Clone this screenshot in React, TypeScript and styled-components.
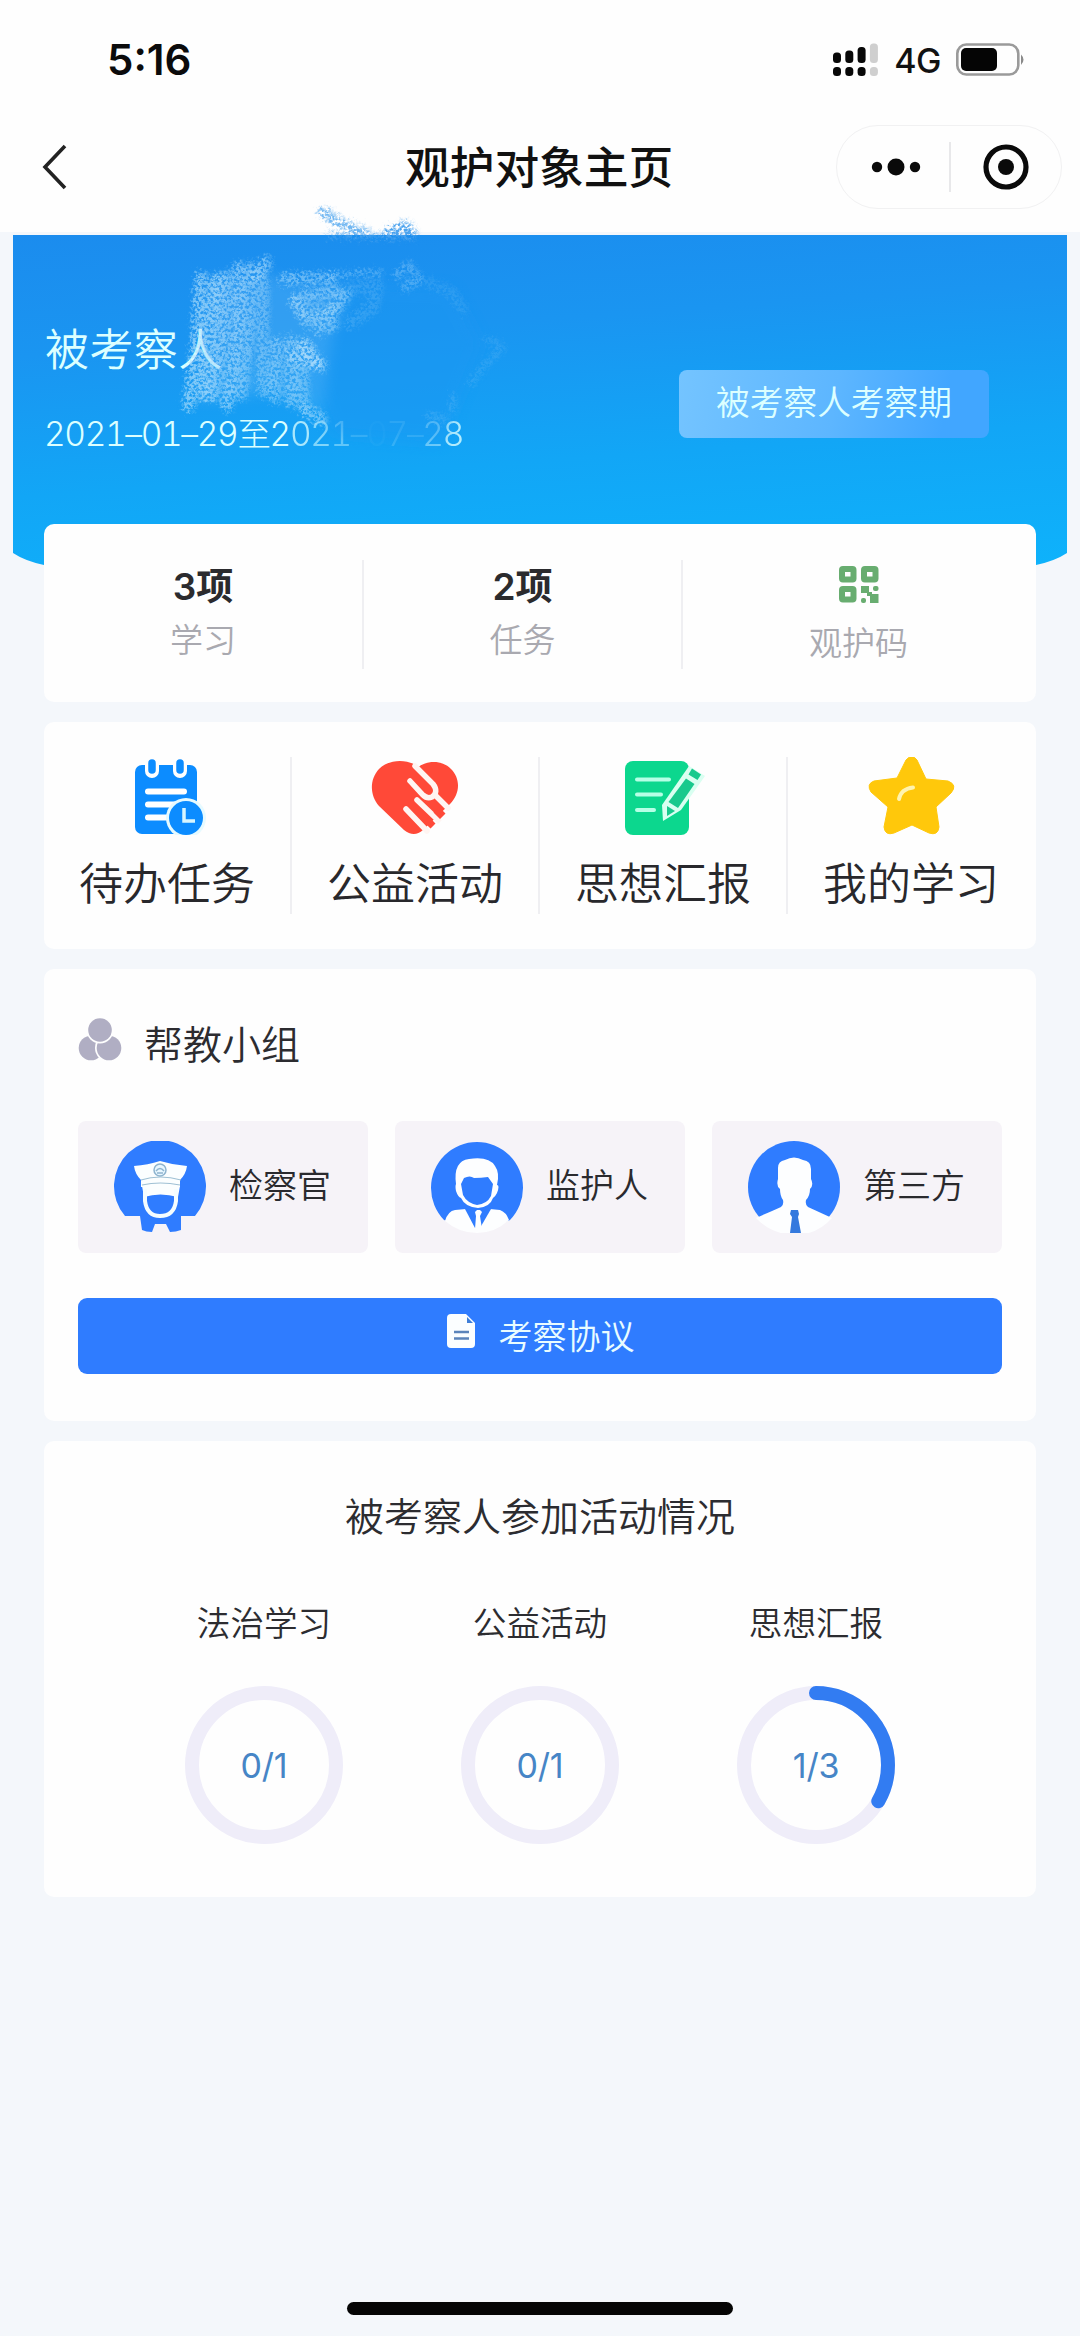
import React from "react";
import styled, { createGlobalStyle } from "styled-components";

const Global = createGlobalStyle`
  * { box-sizing: border-box; }
  body { margin: 0; background: #f4f7fb; }
`;

const Page = styled.main`
  width: 1080px;
  height: 2336px;
  background: #f4f7fb;
  color: #2c2c30;
  font-family: "Liberation Sans", "Noto Sans CJK SC", sans-serif;
  display: flex;
  flex-direction: column;
  position: relative;
  overflow: hidden;
`;

const StatusBar = styled.div`
  height: 118px;
  flex: none;
  background: #fefefe;
  display: flex;
  align-items: center;
  justify-content: space-between;
  padding: 1px 56px 0 107px;
`;

const Clock = styled.span`
  font: 600 42px/50px Inter, "Liberation Sans", sans-serif;
  color: #0b0b0c;
  letter-spacing: 0;
`;

const StatusRight = styled.div`
  display: flex;
  align-items: center;
`;

const Network = styled.span`
  font: 500 34px/40px Inter, "Liberation Sans", sans-serif;
  color: #111;
  letter-spacing: -0.5px;
  margin: 2px 15px 0 15px;
`;

const NavBar = styled.header`
  height: 114px;
  flex: none;
  background: #fefefe;
  display: grid;
  grid-template-columns: 405px 1fr 226px;
  align-items: start;
  padding: 7px 18px 0 0;
`;

const Back = styled.button`
  border: 0;
  background: none;
  padding: 0 0 0 42px;
  height: 84px;
  display: flex;
  align-items: center;
`;

const Title = styled.h1`
  margin: 2px 0 0;
  font-size: 44.7px;
  line-height: 84px;
  font-weight: 500;
  color: #111;
  white-space: nowrap;
`;

const Capsule = styled.div`
  height: 84px;
  border: 1.500px solid #f1f1f2;
  border-radius: 42px;
  display: flex;
  align-items: center;
`;

const CapsuleHalf = styled.span`
  width: 112px;
  display: flex;
  justify-content: center;
  padding-left: 6px;
  & + & { border-left: 2px solid #e8e8ea; padding: 0; }
`;

const Hero = styled.section`
  margin: 3px 13px 0;
  height: 330px;
  flex: none;
  position: relative;
  background: linear-gradient(176deg, #1b8cee 0%, #1a95f1 30%, #12a6f6 65%, #0eb2fb 100%);
  clip-path: path("M0 0H1054V318Q1042 326 1023 330H31Q12 326 0 318Z");
  display: flex;
  justify-content: space-between;
  padding: 83px 78px 0 32px;
`;

const Person = styled.div`
  display: flex;
  flex-direction: column;
  color: #dcffff;
`;

const PersonName = styled.span`
  font-size: 44px;
  line-height: 66px;
  font-weight: 350;
  letter-spacing: 0.4px;
`;

const Period = styled.span`
  margin: 25px 0 0 -1px;
  font: 300 33.500px/50px Inter, "Noto Sans CJK SC", sans-serif;
  font-feature-settings: "tnum";
  letter-spacing: -1.350px;
  white-space: nowrap;
`;

const Faded = styled.span<{ $a: number }>`
  opacity: ${(p) => p.$a};
`;

const Badge = styled.span`
  margin-top: 52px;
  width: 310px;
  height: 68px;
  border-radius: 8px;
  background: linear-gradient(100deg, #74c4ff, #5db6ff 50%, #41a6ff 85%);
  color: #dcffff;
  font-size: 33.7px;
  line-height: 67px;
  font-weight: 350;
  text-align: center;
`;

const Smudge = styled.svg`
  position: absolute;
  left: 0;
  top: 200px;
  pointer-events: none;
`;

const Cards = styled.div`
  display: flex;
  flex-direction: column;
  gap: 20px;
  padding: 0 44px;
  margin-top: -41px;
  position: relative;
`;

const Card = styled.section<{ $h: number }>`
  height: ${(p) => p.$h}px;
  background: #fefefe;
  border-radius: 10px;
`;

const StatCard = styled(Card)`
  display: grid;
  grid-template-columns: 318px 319px 1fr;
  padding-top: 36px;
`;

const Stat = styled.div`
  height: 109px;
  display: flex;
  flex-direction: column;
  align-items: center;
  & + & { border-left: 2px solid #efeff2; }
  &:last-child { padding-right: 2px; }
`;

const StatValue = styled.strong`
  margin-top: 1px;
  font: 600 37px/52px Inter, "Noto Sans CJK SC", sans-serif;
  color: #2b2b2e;
`;

const StatLabel = styled.span`
  margin-top: 2px;
  font-size: 33px;
  line-height: 52px;
  font-weight: 350;
  color: #a9a9b0;
`;

const CodeIcon = styled.svg`
  margin: 6px 0 14px;
  flex: none;
  & + span { margin-top: 0; }
`;

const MenuCard = styled(Card)`
  display: grid;
  grid-template-columns: repeat(4, 1fr);
  padding-top: 35px;
`;

const MenuItem = styled.div`
  height: 157px;
  display: flex;
  flex-direction: column;
  align-items: center;
  border-right: 2px solid #efeff2;
  &:last-child { border-color: transparent; }
  svg { flex: none; }
`;

const MenuLabel = styled.span`
  flex: none;
  margin-top: 17px;
  font-size: 44px;
  line-height: 66px;
  font-weight: 350;
  color: #28282c;
`;

const TeamCard = styled(Card)`
  padding: 42px 34px 0;
`;

const TeamHead = styled.div`
  display: flex;
  align-items: center;
  height: 64px;
  svg { margin-top: -6px; }
`;

const TeamTitle = styled.h2`
  margin: 5px 0 0 22px;
  font-size: 39px;
  line-height: 58px;
  font-weight: 350;
`;

const Roles = styled.div`
  margin-top: 46px;
  display: grid;
  grid-template-columns: repeat(3, 1fr);
  gap: 27px;
`;

const Role = styled.div`
  height: 132px;
  border-radius: 8px;
  background: #f6f3f8;
  display: flex;
  align-items: center;
  padding: 0 0 0 36px;
`;

const RoleName = styled.span`
  margin: -3px 0 0 23px;
  font-size: 34px;
  line-height: 50px;
  font-weight: 350;
  color: #2a2a2e;
`;

const AgreementButton = styled.button`
  margin: 45px 0 0;
  width: 100%;
  height: 76px;
  border: 0;
  border-radius: 9px;
  background: #2f7cff;
  color: #e9fcff;
  display: flex;
  align-items: center;
  justify-content: center;
  gap: 23px;
  padding: 0 0 2px;
  font: 350 34px/50px "Noto Sans CJK SC", sans-serif;
  svg { margin-top: -8px; }
`;

const ActivityCard = styled(Card)`
  display: flex;
  flex-direction: column;
  align-items: center;
  padding-top: 48px;
`;

const ActivityTitle = styled.h2`
  margin: 0;
  font-size: 39px;
  line-height: 58px;
  font-weight: 350;
`;

const Rings = styled.div`
  margin-top: 53px;
  display: grid;
  grid-template-columns: repeat(3, 276px);
`;

const RingItem = styled.div`
  display: flex;
  flex-direction: column;
  align-items: center;
  font-size: 33.6px;
  line-height: 50px;
  font-weight: 350;
`;

const RingBox = styled.div`
  margin-top: 36px;
  display: grid;
  place-items: center;
  & > * { grid-area: 1 / 1; }
`;

const RingText = styled.span`
  font: 400 34px/40px Inter, "Liberation Sans", sans-serif;
  letter-spacing: -0.2px;
  margin-top: 2px;
  color: #4685c6;
`;

const HomeIndicator = styled.div`
  width: 386px;
  height: 13px;
  border-radius: 7px;
  background: #050505;
  margin: auto auto 21px;
`;

const Signal = () => (
  <svg width="46" height="34" viewBox="0 0 46 34">
    {[0, 1, 2, 3].map((i) => (
      <g key={i} fill={i === 3 ? "#cfcfcf" : "#080808"}>
        <rect x={i * 12.3} y={9.5 - [0, 2, 5.5, 9][i]} width="8" height={10.5 + [0, 2, 5.5, 9][i]} rx="3.5" />
        <rect x={i * 12.3} y="24" width="8" height="9" rx="3.5" />
      </g>
    ))}
  </svg>
);

const Battery = () => (
  <svg width="68" height="34" viewBox="0 0 68 34">
    <rect x="1.300" y="1.500" width="61" height="30" rx="9" fill="none" stroke="#9a9a9a" strokeWidth="2.600" />
    <rect x="5" y="5" width="36" height="23" rx="5" fill="#050505" />
    <path d="M65 11.500q5 5 0 10.500z" fill="#8a8a8a" />
  </svg>
);

const CalendarIcon = () => (
  <svg width="86" height="78" viewBox="0 0 86 78">
    <rect x="11" y="8" width="62" height="69" rx="7" fill="#0c8cff" />
    <path d="M28 3v11M56 3v11" stroke="#fefefe" strokeWidth="14" strokeLinecap="round" />
    <path d="M28 6v7M56 6v7" stroke="#0c8cff" strokeWidth="7.500" strokeLinecap="round" />
    <path d="M24 34.500H60M24 47.500H52M24 60.500H44" stroke="#fff" strokeWidth="6" strokeLinecap="round" />
    <circle cx="62" cy="61" r="20" fill="#e6faff" />
    <circle cx="62" cy="61" r="17" fill="#0c8cff" />
    <path d="M60 51v13h11" fill="none" stroke="#d8f6ff" strokeWidth="3.500" />
  </svg>
);

const HeartIcon = () => (
  <svg width="88" height="78" viewBox="0 0 88 78">
    <path
      d="M46 9C36 2 18 2 8 12C-2 23-1 39 8 49L33 73Q43 81 52 73L79 47C89 37 90 22 80 12C71 3 56 3 46 11Z"
      fill="#ff4938"
    />
    <g fill="none" stroke="#fff5f2" strokeWidth="5.500" strokeLinecap="round">
      <path d="M44 9L62 27Q68 35 61 40Q56 42 52 38L39 24" />
      <path d="M64 38L77 51" />
      <path d="M46 43L68 64" />
      <path d="M35 52L56 74" />
    </g>
    <path d="M54 80L88 46V80Z" fill="#fefefe" />
    <path d="M58 60l6.500 6.500-5 5-7-7zM68 50l6.500 6.500-5.500 5.500-6.500-6.500z" fill="#ff4938" />
  </svg>
);

const NoteIcon = () => (
  <svg width="84" height="78" viewBox="0 0 84 78">
    <rect x="4" y="4" width="64" height="74" rx="8" fill="#0cd78e" />
    <path d="M16 22.500H48M16 37.500H40M16 53H33" stroke="#b6ffe6" strokeWidth="4" strokeLinecap="round" />
    <path d="M68 9L84 19L60 53L42 64L41 48Z" fill="#d9fff1" />
    <path d="M71 11.500L80 17.500L76.500 23L67.500 17.500Z" fill="#18c98d" />
    <path d="M65 21.500L73.500 27L57 51L47.500 45Z" fill="#18c98d" />
    <path d="M46 49L54 54L46 59Z" fill="#18c98d" />
  </svg>
);

const StarIcon = () => (
  <svg width="88" height="78" viewBox="0 1 88 78">
    <path
      d="M39 4Q45-3 50 4L59 23L81 25Q91 29 84 37L69 51L72 71Q71 80 62 77L45 69L27 77Q18 80 17 71L21 51L4 36Q-1 28 7 25L30 22Z"
      fill="#ffc80b"
      stroke="#ffc80b"
      strokeLinejoin="round"
    />
    <path d="M32 43Q34 33 46 31.500" fill="none" stroke="#fff3b0" strokeWidth="4" strokeLinecap="round" />
  </svg>
);

const TeamIcon = () => (
  <svg width="44" height="44" viewBox="0 0 44 44">
    <circle cx="13" cy="30" r="12.300" fill="#b0aec3" />
    <circle cx="31" cy="30" r="14" fill="#fefefe" />
    <circle cx="31" cy="30" r="12.300" fill="#b0aec3" />
    <circle cx="22" cy="12" r="13.500" fill="#fefefe" />
    <circle cx="22" cy="12" r="11.800" fill="#b0aec3" />
  </svg>
);

const Officer = () => (
  <svg width="92" height="92" viewBox="0 0 92 92">
    <path d="M11 75A46 46 0 1 1 81 75H67V89Q62 91 56 91L52 83H41L38 91Q32 91 28 89L26 75Z" fill="#2f7cff" />
    <path d="M20 25Q34 24 46 20Q59 24 73 25Q72 33 66 39V46H27V39Q21 33 20 25Z" fill="#fbfeff" />
    <path d="M28 45H66L64 56Q46 51 30 56Z" fill="#fbfeff" />
    <path d="M31 48V60Q33 75 46 75Q60 75 62 60V48" fill="none" stroke="#f5fdff" strokeWidth="4" />
    <path d="M27 39Q46 33 67 39M28 44Q46 40 66 44" fill="none" stroke="#9fc0d4" strokeWidth="1.200" />
    <circle cx="46" cy="29" r="6" fill="#e8f7ff" stroke="#8eb4cf" strokeWidth="1.500" />
    <path d="M42 30q4-5 8 0M43 32h6" fill="none" stroke="#8eb4cf" strokeWidth="1.500" />
  </svg>
);

const Guardian = () => (
  <svg width="92" height="92" viewBox="0 0 92 92">
    <path d="M13 79A46 46 0 1 1 79 79Q46 92 13 79Z" fill="#2f7cff" />
    <path d="M14 80Q17 70 24 69L35 68L45 88L48 68L59 68L69 69Q75 71 78 79Q64 92 46 92Q28 92 14 80Z" fill="#fdfeff" />
    <path d="M34 68L44 87H49L60 68Z" fill="#2f7cff" />
    <path d="M44 71L46 69H49L51 71L49 75L51 88L47 91L44 88L45 75Z" fill="#fdfeff" />
    <path d="M25 43Q22 20 38 18Q58 15 64 25Q69 32 66 44Q69 44 66 52Q64 56 62 57Q59 66 47 67Q34 66 30 57Q27 56 25 50Q24 45 25 43Z" fill="#fdfeff" />
    <path d="M30 43L33 37Q39 34 43 37Q50 37 57 36L62 43L60 55Q56 63 46 64Q36 62 32 54Z" fill="#2f7cff" />
  </svg>
);

const ThirdParty = () => (
  <svg width="92" height="92" viewBox="0 0 92 92">
    <circle cx="46" cy="46" r="46" fill="#2f7cff" />
    <path
      d="M8 77Q24 70 33 66Q36 64 35 59Q32 55 32 48Q28 45 30 38V27Q30 20 37 19Q46 14 55 19Q63 20 63 28V38Q66 44 62 48Q62 55 58 59Q57 64 60 66L84 77Q69 94 46 94Q23 93 8 77Z"
      fill="#fdfeff"
    />
    <path d="M43 69H50L51 73L50 76L53 92H42L44 76L42 73Z" fill="#3479de" />
  </svg>
);

const DocIcon = () => (
  <svg width="30" height="34" viewBox="0 0 30 34">
    <path d="M5 0H20L29 9V30Q29 34 25 34H5Q1 34 1 30V4Q1 0 5 0Z" fill="#fbfeff" />
    <path d="M21 3V9H27Z" fill="#3f7fd8" />
    <path d="M8 18H23M8 24.500H23" stroke="#5b84ba" strokeWidth="2.600" />
  </svg>
);

const R = 72;
const C = 2 * Math.PI * R;

function Ring({ label, done, total }: { label: string; done: number; total: number }) {
  return (
    <RingItem>
      {label}
      <RingBox>
        <svg width="158" height="158" viewBox="0 0 158 158" fill="none">
          <circle cx="79" cy="79" r={R} stroke="#efedf9" strokeWidth="14" />
          {done > 0 && (
            <circle
              cx="79"
              cy="79"
              r={R}
              stroke="#327cf2"
              strokeWidth="14"
              strokeLinecap="round"
              strokeDasharray={`${(C * done) / total} ${C}`}
              transform="rotate(-90 79 79)"
            />
          )}
        </svg>
        <RingText>{`${done}/${total}`}</RingText>
      </RingBox>
    </RingItem>
  );
}

const Scribble = () => (
  <Smudge width="560" height="260" viewBox="-2 197 560 260">
    <defs>
      <filter id="chalk" filterUnits="userSpaceOnUse" x="150" y="197" width="400" height="260" colorInterpolationFilters="sRGB">
        <feTurbulence type="fractalNoise" baseFrequency="0.34" numOctaves="3" seed="7" result="n" />
        <feColorMatrix in="n" type="matrix" values="0 0 0 0 1  0 0 0 0 1  0 0 0 0 1  4 0 0 0 -1.35" result="m" />
        <feGaussianBlur in="SourceGraphic" stdDeviation="2" result="s" />
        <feDisplacementMap in="s" in2="n" scale="14" xChannelSelector="R" yChannelSelector="G" result="d" />
        <feComposite in="d" in2="m" operator="in" />
      </filter>
      <filter id="soft" x="-20%" y="-20%" width="140%" height="140%">
        <feGaussianBlur stdDeviation="7" />
      </filter>
    </defs>
    <path d="M345 280L450 285L480 340L440 440L330 430L300 345Z" fill="#1c97f2" opacity="0.45" filter="url(#soft)" />
    <path d="M202 278L262 270L300 282L345 282L330 335L320 410L270 390L194 398Z" fill="#6fbdf8" opacity="0.28" filter="url(#soft)" />
    <g filter="url(#chalk)" fill="none" strokeLinecap="round" strokeLinejoin="round">
      <g stroke="#b4e0fb" strokeWidth="13">
        <path d="M200 275L196 340L188 402" opacity="0.65" />
        <path d="M214 277L208 335L202 392" opacity="0.65" />
        <path d="M224 274L222 330L212 392" opacity="0.6" />
        <path d="M238 265L236 330L226 402" opacity="0.6" />
        <path d="M250 264L248 330L240 392" opacity="0.5" />
        <path d="M265 260L256 272" opacity="0.6" />
        <path d="M262 278L262 388" opacity="0.42" />
        <path d="M276 340L274 394" opacity="0.5" />
        <path d="M290 338L290 398" opacity="0.5" />
        <path d="M302 340L302 402" opacity="0.45" />
        <path d="M304 342L316 360" opacity="0.7" />
        <path d="M292 352L320 362" opacity="0.5" />
        <path d="M306 408L320 416" opacity="0.55" />
        <path d="M284 276L330 275" opacity="0.5" />
        <path d="M294 300L306 318L330 312L344 292" opacity="0.5" />
        <path d="M296 296L334 288" opacity="0.5" />
        <path d="M304 308L332 306" opacity="0.4" />
        <path d="M318 326L332 322" opacity="0.45" />
      </g>
      <g stroke="#9dd2fa">
        <path d="M330 272L380 269" strokeWidth="6" opacity="0.45" />
        <path d="M396 272L408 262L418 276L404 284" strokeWidth="9" opacity="0.4" />
        <path d="M350 286L376 282L372 304L350 320" strokeWidth="14" opacity="0.2" />
        <path d="M425 278L452 290L462 306" strokeWidth="11" opacity="0.14" />
        <path d="M486 336L502 344L484 362L470 380" strokeWidth="8" opacity="0.17" />
        <path d="M452 394V406M428 412L444 416" strokeWidth="8" opacity="0.2" />
      </g>
      <g stroke="#4aa2ee" strokeWidth="10">
        <path d="M322 209L342 222L364 230" opacity="0.8" />
        <path d="M328 233L412 234" strokeWidth="5" opacity="0.8" />
        <path d="M388 231L404 224L410 231" strokeWidth="12" />
      </g>
    </g>
  </Smudge>
);

const stats = [
  ["3项", "学习"],
  ["2项", "任务"],
];

const menu: [string, () => React.JSX.Element][] = [
  ["待办任务", CalendarIcon],
  ["公益活动", HeartIcon],
  ["思想汇报", NoteIcon],
  ["我的学习", StarIcon],
];

const roles: [string, () => React.JSX.Element][] = [
  ["检察官", Officer],
  ["监护人", Guardian],
  ["第三方", ThirdParty],
];

const fadedDate: [string, number][] = [
  ["0", 0.75],
  ["2", 0.55],
  ["1", 0.4],
  ["–", 0.2],
  ["0", 0.04],
  ["7", 0.18],
  ["–", 0.2],
  ["2", 0.5],
  ["8", 0.8],
];

export default function App() {
  return (
    <Page>
      <Global />
      <StatusBar>
        <Clock>5:16</Clock>
        <StatusRight>
          <Signal />
          <Network>4G</Network>
          <Battery />
        </StatusRight>
      </StatusBar>
      <NavBar>
        <Back aria-label="返回">
          <svg width="26" height="46" viewBox="0 0 26 46" fill="none">
            <path d="M23 2L3 23L23 44" stroke="#222" strokeWidth="3.600" />
          </svg>
        </Back>
        <Title>观护对象主页</Title>
        <Capsule>
          <CapsuleHalf>
            <svg width="50" height="50" viewBox="0 0 50 50" fill="#0a0a0a">
              <circle cx="6" cy="25" r="5.200" />
              <circle cx="25" cy="25" r="8.500" />
              <circle cx="44" cy="25" r="5.200" />
            </svg>
          </CapsuleHalf>
          <CapsuleHalf>
            <svg width="50" height="50" viewBox="0 0 50 50">
              <circle cx="25" cy="25" r="20" fill="none" stroke="#0a0a0a" strokeWidth="5.200" />
              <circle cx="25" cy="25" r="8" fill="#0a0a0a" />
            </svg>
          </CapsuleHalf>
        </Capsule>
      </NavBar>
      <Hero>
        <Person>
          <PersonName>被考察人</PersonName>
          <Period>
            2021–01–29至2
            {fadedDate.map(([c, a], i) => (
              <Faded key={i} $a={a}>{c}</Faded>
            ))}
          </Period>
        </Person>
        <Badge>被考察人考察期</Badge>
      </Hero>
      <Scribble />
      <Cards>
        <StatCard $h={178}>
          {stats.map(([v, l]) => (
            <Stat key={l}>
              <StatValue>{v}</StatValue>
              <StatLabel>{l}</StatLabel>
            </Stat>
          ))}
          <Stat>
            <CodeIcon width="40" height="38" viewBox="0 0 40 38">
              <g fill="none" stroke="#68ad70" strokeWidth="6">
                <rect x="3" y="3" width="11.500" height="10.500" rx="1" />
                <rect x="25" y="3" width="11.500" height="10.500" rx="1" />
                <rect x="3" y="23" width="11.500" height="10.500" rx="1" />
              </g>
              <g fill="#68ad70">
                <rect x="22" y="20" width="8" height="7" />
                <rect x="34" y="20" width="5.500" height="5" rx="2" />
                <rect x="31" y="28" width="8.500" height="9" />
                <rect x="22" y="32" width="5" height="5" rx="2" />
                <rect x="28" y="26" width="5" height="4" />
              </g>
            </CodeIcon>
            <StatLabel>观护码</StatLabel>
          </Stat>
        </StatCard>
        <MenuCard $h={227}>
          {menu.map(([label, Icon]) => (
            <MenuItem key={label}>
              <Icon />
              <MenuLabel>{label}</MenuLabel>
            </MenuItem>
          ))}
        </MenuCard>
        <TeamCard $h={452}>
          <TeamHead>
            <TeamIcon />
            <TeamTitle>帮教小组</TeamTitle>
          </TeamHead>
          <Roles>
            {roles.map(([name, Avatar]) => (
              <Role key={name}>
                <Avatar />
                <RoleName>{name}</RoleName>
              </Role>
            ))}
          </Roles>
          <AgreementButton>
            <DocIcon />
            考察协议
          </AgreementButton>
        </TeamCard>
        <ActivityCard $h={456}>
          <ActivityTitle>被考察人参加活动情况</ActivityTitle>
          <Rings>
            <Ring label="法治学习" done={0} total={1} />
            <Ring label="公益活动" done={0} total={1} />
            <Ring label="思想汇报" done={1} total={3} />
          </Rings>
        </ActivityCard>
      </Cards>
      <HomeIndicator />
    </Page>
  );
}
